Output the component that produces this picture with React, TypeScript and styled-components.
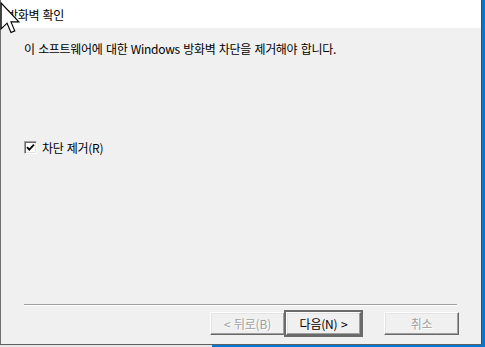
import React from "react";
import styled, { createGlobalStyle } from "styled-components";

const GlobalStyle = createGlobalStyle`
  html, body { margin: 0; padding: 0; background: #0078d7; }
  body { font-family: "Noto Sans CJK KR", "Liberation Sans", sans-serif; }
`;

const Screen = styled.div`
  position: relative;
  width: 485px;
  height: 347px;
  display: flex;
  flex-direction: column;
  background: #0078d7;
  overflow: hidden;
`;

const Window = styled.div`
  box-sizing: border-box;
  width: 482px;
  height: 345px;
  display: flex;
  flex-direction: column;
  border-left: 1px solid #6f6f6f;
  border-right: 1px solid #3d4f63;
  border-bottom: 1px solid #5f5f5f;
  font-family: "Noto Sans CJK KR", "Liberation Sans", sans-serif;
  font-size: 12px;
  color: #000;
`;

const Header = styled.div`
  height: 28px;
  background: #fff;
  display: flex;
  align-items: center;
  padding-left: 6px;
  letter-spacing: -0.3px;
  word-spacing: 1px;
`;

const Body = styled.div`
  flex: 1;
  background: #f0f0f0;
  display: flex;
  flex-direction: column;
  padding: 0 22px 9px 23px;
`;

const Message = styled.div`
  margin-top: 13px;
  line-height: 16px;
  height: 16px;
  letter-spacing: -0.3px;
  word-spacing: 1px;
  white-space: nowrap;
`;

const CheckRow = styled.label`
  margin-top: 84px;
  display: flex;
  align-items: center;
  gap: 5px;
  height: 13px;
  line-height: 13px;
  letter-spacing: -0.3px;
  word-spacing: 1px;
  white-space: pre;
`;

const CheckBox = styled.span`
  box-sizing: border-box;
  width: 13px;
  height: 13px;
  background: #fff;
  border: 1px solid;
  border-color: #a0a0a0 #ffffff #ffffff #a0a0a0;
  box-shadow: inset 1px 1px #696969, inset -1px -1px #e3e3e3;
  display: flex;
  align-items: center;
  justify-content: center;
`;

const Spacer = styled.div`
  flex: 1;
`;

const Separator = styled.div`
  margin-right: 2px;
  height: 1px;
  background: #a0a0a0;
  border-bottom: 1px solid #ffffff;
  margin-bottom: 6px;
`;

const ButtonRow = styled.div`
  display: flex;
  justify-content: flex-end;
  align-items: center;
`;

const Button = styled.button<{ $default?: boolean; $disabled?: boolean; $gap?: number }>`
  box-sizing: border-box;
  width: 75px;
  height: 23px;
  margin-left: ${(p) => p.$gap ?? 0}px;
  padding: 0;
  background: #f0f0f0;
  font-family: "Noto Sans CJK KR", "Liberation Sans", sans-serif;
  font-size: 12px;
  letter-spacing: -0.2px;
  word-spacing: 1px;
  color: ${(p) => (p.$disabled ? "#a0a0a0" : "#000")};
  text-shadow: ${(p) => (p.$disabled ? "1px 1px #ffffff" : "none")};
  border: 1px solid;
  border-color: #ffffff #696969 #696969 #ffffff;
  box-shadow: inset -1px -1px #a0a0a0, inset 1px 1px #e3e3e3;
  outline: ${(p) => (p.$default ? "2px solid #6b6b6b" : "none")};
  outline-offset: 0;
  display: flex;
  align-items: center;
  justify-content: center;
`;

const BottomStrip = styled.div`
  width: 212px;
  height: 2px;
  background: #e6e6e6;
`;

const Cursor = styled.svg`
  position: absolute;
  left: 0;
  top: 2px;
`;

export default function App() {
  return (
    <>
      <GlobalStyle />
      <Screen>
        <Window>
          <Header>방화벽 확인</Header>
          <Body>
            <Message>이 소프트웨어에 대한 Windows 방화벽 차단을 제거해야 합니다.</Message>
            <CheckRow>
              <CheckBox>
                <svg width="9" height="9" viewBox="0 0 9 9">
                  <path d="M1 4.2 L3.3 6.6 L8 1.6" fill="none" stroke="#000" strokeWidth="1.8" />
                </svg>
              </CheckBox>
              {"차단 제거(R)"}
            </CheckRow>
            <Spacer />
            <Separator />
            <ButtonRow>
              <Button $disabled>&lt; 뒤로(B)</Button>
              <Button $default $gap={1}>다음(N) &gt;</Button>
              <Button $disabled $gap={23}>취소</Button>
            </ButtonRow>
          </Body>
        </Window>
        <BottomStrip />
        <Cursor width="20" height="32" viewBox="0 0 12 19.5">
          <path
            d="M0.6 0.6 L0.6 16.4 L4.2 12.9 L6.6 18.6 L8.9 17.6 L6.6 12.1 L11.4 12.1 Z"
            fill="#fff"
            stroke="#000"
            strokeWidth="0.7"
            strokeLinejoin="miter"
          />
        </Cursor>
      </Screen>
    </>
  );
}
